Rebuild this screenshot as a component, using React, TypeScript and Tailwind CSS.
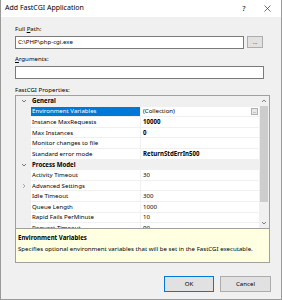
import React from "react";

type Row =
  | { kind: "cat"; label: string }
  | { kind: "item"; label: string; value: string; bold?: boolean; selected?: boolean; expand?: boolean; ellipsis?: boolean };

const rows: Row[] = [
  { kind: "cat", label: "General" },
  { kind: "item", label: "Environment Variables", value: "(Collection)", selected: true, ellipsis: true },
  { kind: "item", label: "Instance MaxRequests", value: "10000", bold: true },
  { kind: "item", label: "Max Instances", value: "0", bold: true },
  { kind: "item", label: "Monitor changes to file", value: "" },
  { kind: "item", label: "Standard error mode", value: "ReturnStdErrIn500", bold: true },
  { kind: "cat", label: "Process Model" },
  { kind: "item", label: "Activity Timeout", value: "30" },
  { kind: "item", label: "Advanced Settings", value: "", expand: true },
  { kind: "item", label: "Idle Timeout", value: "300" },
  { kind: "item", label: "Queue Length", value: "1000" },
  { kind: "item", label: "Rapid Fails PerMinute", value: "10" },
  { kind: "item", label: "Request Timeout", value: "90" },
];

function Chevron({ down }: { down: boolean }) {
  return (
    <svg width="6" height="6" viewBox="0 0 6 6" className="shrink-0">
      {down ? (
        <path d="M1 2 L3 4 L5 2" fill="none" stroke="#555" strokeWidth="0.8" />
      ) : (
        <path d="M2 1 L4 3 L2 5" fill="none" stroke="#999" strokeWidth="0.8" />
      )}
    </svg>
  );
}

export default function App() {
  return (
    <div
      className="w-[282px] h-[300px] bg-[#f0f0f0] border-l border-r border-b border-[#9a9a9a] flex flex-col text-black overflow-hidden"
      style={{ fontFamily: '"Noto Sans", "Open Sans", sans-serif' }}
    >
      {/* Title bar */}
      <div className="h-[17px] bg-white flex items-center pl-[4px] text-[7px] shrink-0">
        <span className="flex-1">Add FastCGI Application</span>
        <span className="w-[10px] text-center mr-[15px] text-[7.5px]">?</span>
        <svg width="7" height="7" viewBox="0 0 7 7" className="mr-[10px]">
          <path d="M0.5 0.5 L6.5 6.5 M6.5 0.5 L0.5 6.5" stroke="#333" strokeWidth="0.7" />
        </svg>
      </div>

      <div className="flex flex-col pl-[14px] pr-[12px] text-[6.1px] leading-none whitespace-nowrap">
        <div className="h-[8px] mt-[8px] flex items-center">
          Full&nbsp;<span className="underline">P</span>ath:
        </div>
        <div className="flex mt-[3px] h-[13px]">
          <div className="w-[229px] h-[13px] bg-white border border-[#7a7a7a] flex items-center pl-[2px]">
            C:\PHP\php-cgi.exe
          </div>
          <div className="ml-[3px] w-[16px] h-[12px] bg-[#e1e1e1] border border-[#adadad] flex items-center justify-center text-[6px] text-[#444]">
            ...
          </div>
        </div>
        <div className="h-[8px] mt-[6px] flex items-center">
          <span className="underline">A</span>rguments:
        </div>
        <div className="mt-[3px] w-[249px] h-[13px] bg-white border border-[#7a7a7a]" />
        <div className="h-[8px] mt-[7px] flex items-center">FastCGI Properties:</div>

        {/* Property grid */}
        <div className="mt-[1px] w-[255px] border border-[#a0a0a0] flex flex-col">
          <div className="h-[132px] flex">
            <div className="flex-1 overflow-hidden flex flex-col">
              {rows.map((r, i) =>
                r.kind === "cat" ? (
                  <div key={i} className="h-[10.6px] shrink-0 flex items-center bg-[#f0f0f0] font-bold">
                    <div className="w-[15px] flex justify-center pl-[1px]">
                      <Chevron down />
                    </div>
                    <span className="pl-[1px]">{r.label}</span>
                  </div>
                ) : (
                  <div key={i} className="h-[10.6px] shrink-0 flex bg-[#f0f0f0]">
                    <div className="w-[15px] flex items-center justify-center">
                      {r.expand ? <Chevron down={false} /> : null}
                    </div>
                    <div
                      className={
                        "w-[109px] flex items-center pl-[1px] border-b border-[#f0f0f0] " +
                        (r.selected ? "bg-[#0078d7] text-white" : "bg-white")
                      }
                    >
                      {r.label}
                    </div>
                    <div className="w-[1px] bg-[#f0f0f0]" />
                    <div
                      className={
                        "flex-1 flex items-center pl-[2px] bg-white border-b border-[#f0f0f0] " +
                        (r.bold ? "font-bold" : "")
                      }
                    >
                      <span className="flex-1">{r.value}</span>
                      {r.ellipsis ? (
                        <div className="w-[7px] h-[7px] mr-[1px] bg-[#e8e8e8] border border-[#b0b0b0] flex items-end justify-center text-[4px] leading-none text-[#333]">
                          ...
                        </div>
                      ) : null}
                    </div>
                  </div>
                )
              )}
            </div>
            {/* Scrollbar */}
            <div className="w-[10px] bg-[#f0f0f0] flex flex-col items-center">
              <div className="h-[10px] w-full flex items-center justify-center">
                <svg width="6" height="4" viewBox="0 0 6 4">
                  <path d="M1 3 L3 1 L5 3" fill="none" stroke="#606060" strokeWidth="0.8" />
                </svg>
              </div>
              <div className="w-[8px] h-[96px] bg-[#cdcdcd]" />
              <div className="flex-1" />
              <div className="h-[10px] w-full flex items-center justify-center">
                <svg width="6" height="4" viewBox="0 0 6 4">
                  <path d="M1 1 L3 3 L5 1" fill="none" stroke="#606060" strokeWidth="0.8" />
                </svg>
              </div>
            </div>
          </div>
          <div className="h-[34px] bg-[#ffffe1] border-t border-[#a0a0a0] pl-[2px] flex flex-col">
            <div className="mt-[5px] h-[8px] flex items-center font-bold">Environment Variables</div>
            <div className="mt-[3px] h-[8px] flex items-center">
              Specifies optional environment variables that will be set in the FastCGI executable.
            </div>
          </div>
        </div>

        {/* Buttons */}
        <div className="flex justify-end mt-[13px] gap-[6px] mr-[-2px]">
          <div className="w-[50px] h-[16px] bg-[#e1e1e1] border border-[#0078d7] flex items-center justify-center">
            OK
          </div>
          <div className="w-[51px] h-[16px] bg-[#e1e1e1] border border-[#adadad] flex items-center justify-center">
            Cancel
          </div>
        </div>
      </div>
    </div>
  );
}
